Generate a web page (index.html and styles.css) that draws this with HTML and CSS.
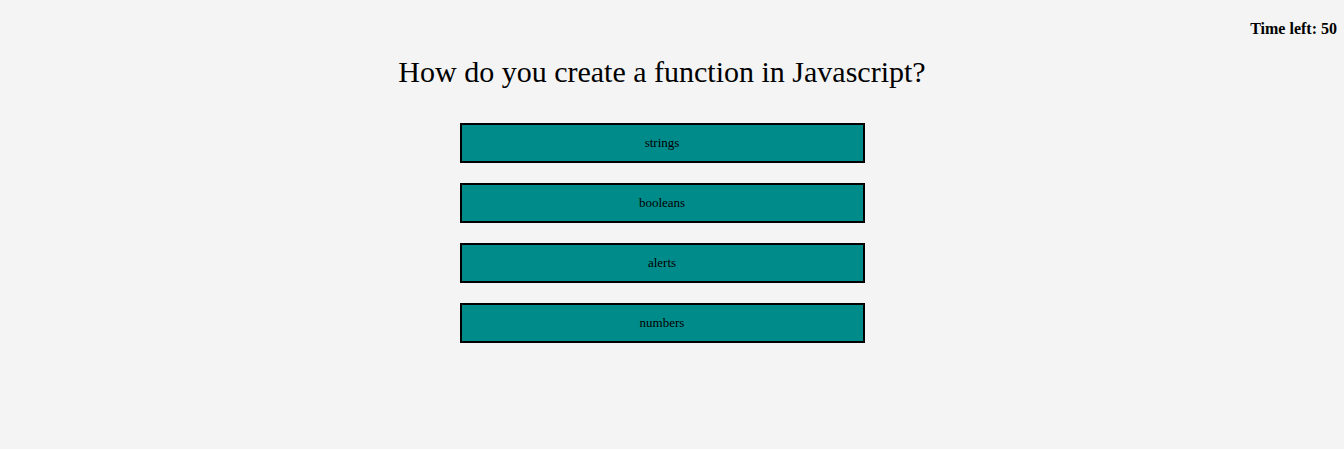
FILE: index.html
```html
<!DOCTYPE html>
<html>
<head>
<meta charset="utf-8">
<link rel="stylesheet" href="styles.css">
</head>
<body>
<header class="top">
  <div class="timer">Time left: <span>50</span></div>
</header>
<main class="quiz">
  <h1 class="question">How do you create a function in Javascript?</h1>
  <div class="choices">
    <button class="choice">strings</button>
    <button class="choice">booleans</button>
    <button class="choice">alerts</button>
    <button class="choice">numbers</button>
  </div>
</main>
</body>
</html>
```
FILE: styles.css
```css
html, body {
  margin: 0;
  padding: 0;
  background: #f4f4f4;
}
body {
  font-family: "Liberation Serif", "Times New Roman", serif;
  color: #000;
  padding: 8px 7px 8px 8px;
}
.top {
  display: flex;
  justify-content: flex-end;
  padding-top: 12px;
}
.timer {
  font-weight: bold;
  font-size: 16px;
  line-height: 17px;
}
.quiz {
  display: flex;
  flex-direction: column;
  align-items: center;
  padding-right: 21px;
}
.question {
  font-weight: normal;
  font-size: 30px;
  line-height: 34px;
  margin: 18px 0 34px;
}
.choices {
  display: flex;
  flex-direction: column;
  gap: 20px;
}
.choice {
  width: 405px;
  height: 40px;
  background: #008b8b;
  border: 2px solid #000;
  font-family: "Liberation Serif", "Times New Roman", serif;
  font-size: 13px;
  color: #000;
  padding: 0;
  margin: 0;
}
```
